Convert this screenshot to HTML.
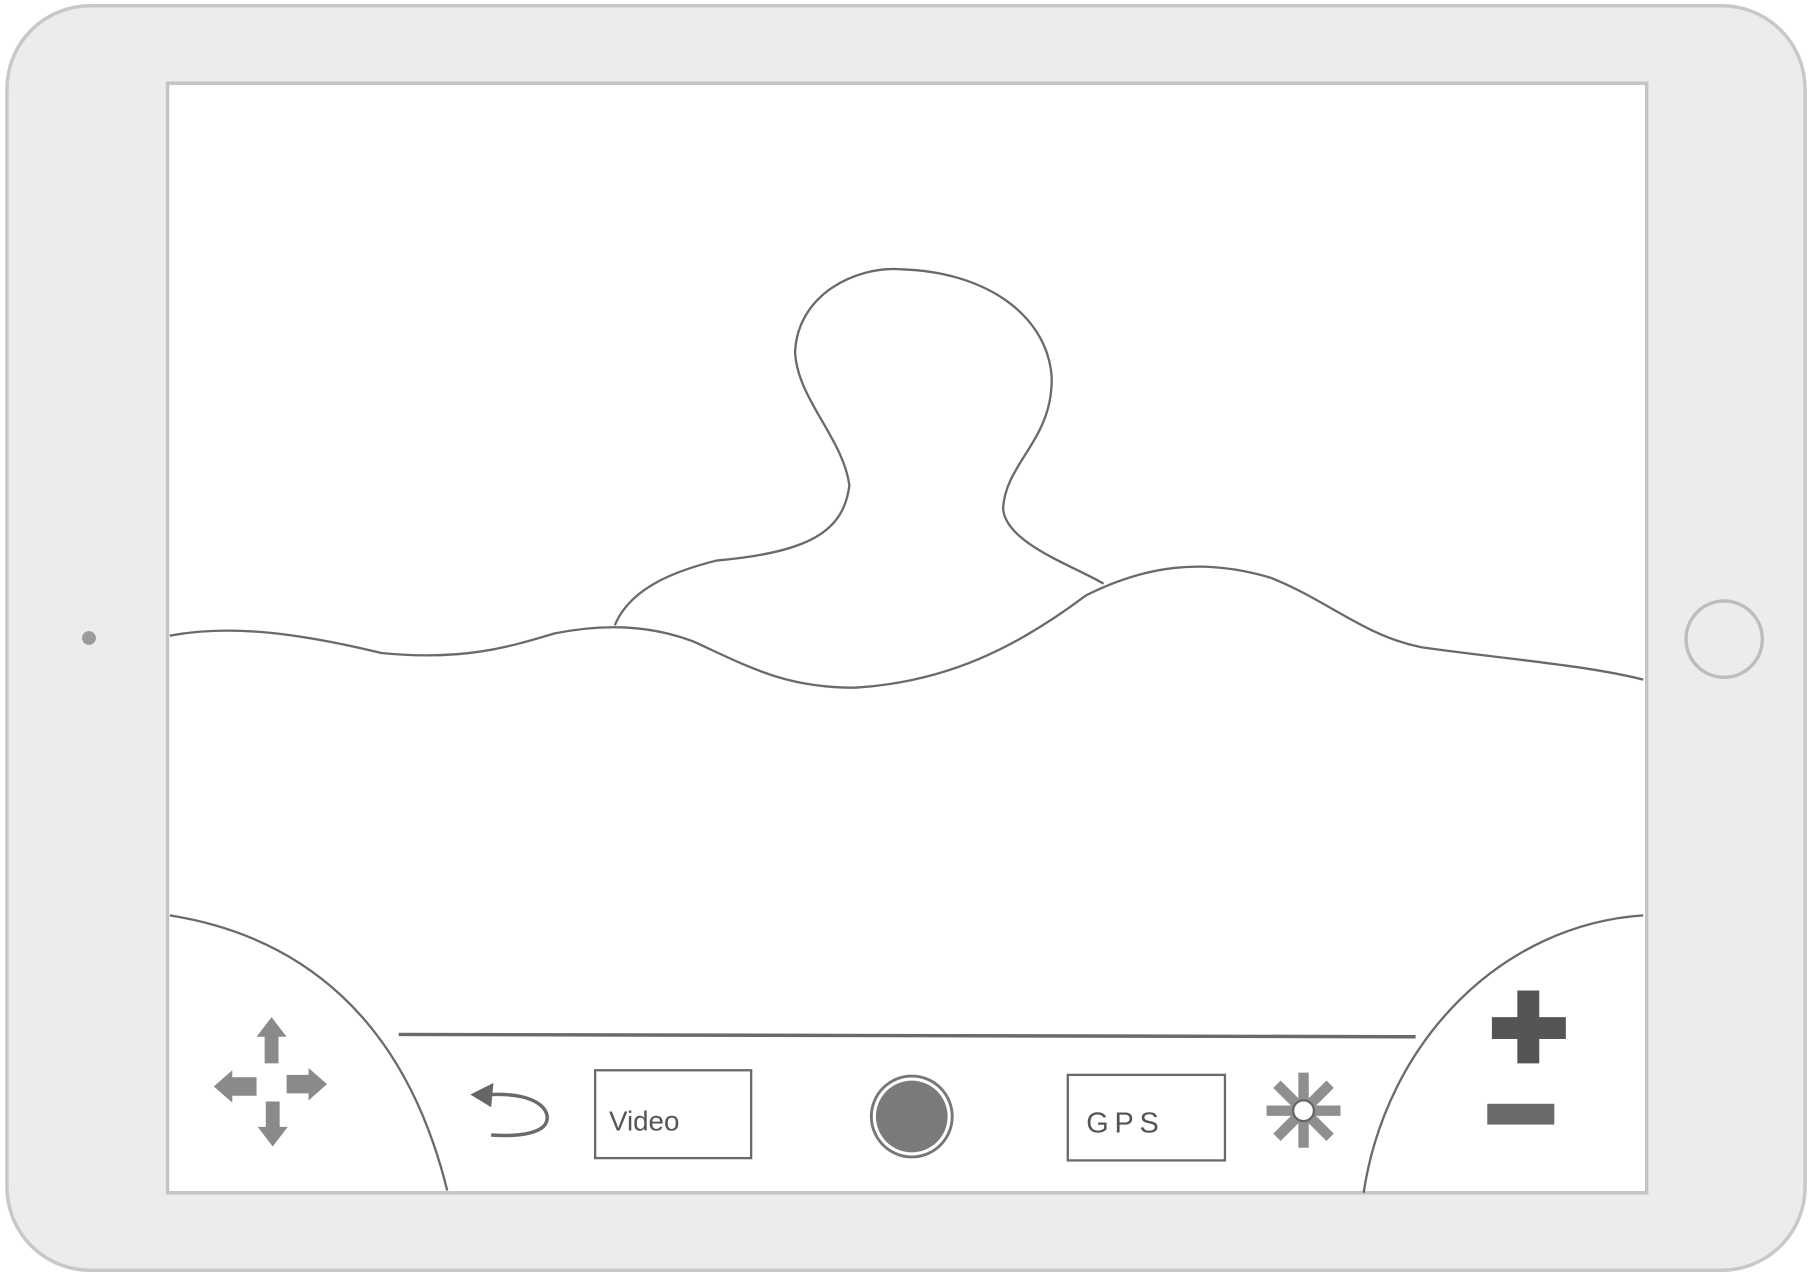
<!DOCTYPE html>
<html><head><meta charset="utf-8"><style>
html,body{margin:0;padding:0;background:#fff;}
svg{display:block;}
text{font-family:"Liberation Sans",sans-serif;}
</style></head><body>
<svg width="1812" height="1276" viewBox="0 0 1568 1104" preserveAspectRatio="none" xmlns="http://www.w3.org/2000/svg">
<rect x="0" y="0" width="1568" height="1104" fill="#fff"/>
<rect x="6" y="5" width="1556" height="1094" rx="72" fill="#ececec" stroke="#c8c8cc" stroke-width="3"/>
<rect x="145" y="72" width="1280" height="960" fill="#fff" stroke="#c4c4c8" stroke-width="3"/>
<circle cx="77" cy="552" r="6" fill="#9a9a9a"/>
<circle cx="1492" cy="553" r="33" fill="none" stroke="#bdbdbd" stroke-width="3"/>
<g fill="none" stroke="#6a6a6a" stroke-width="2">
<path d="M147 550 C200 540 260 548 330 565 C400 572 440 560 480 548 C520 540 560 540 600 555 C650 578 680 595 740 595 C820 590 880 560 940 515 C990 490 1040 482 1100 500 C1150 520 1180 550 1230 560 C1300 570 1370 575 1422 588"/>
<path d="M532 541 C545 510 580 495 620 485 C700 478 730 460 735 420 C730 380 690 345 688 305 C690 255 740 230 780 233 C850 235 905 270 910 325 C912 380 870 400 868 440 C870 470 930 490 955 505"/>
<path d="M147 792 C260 810 350 880 387 1030"/>
<path d="M1180 1032 C1200 900 1300 800 1422 792"/>
<path d="M345 895 L1225 897" stroke-width="3"/>
<rect x="515" y="926" width="135" height="76"/>
<rect x="924" y="930" width="136" height="74"/>
<path d="M425 947 C470 945 480 965 470 975 C460 983 440 983 425 982" stroke-width="3"/>
</g>
<path d="M407 947 L427 937 L425 958 Z" fill="#666"/>
<text x="527" y="978" font-size="24" fill="#555">Video</text>
<text x="940" y="980" font-size="25" fill="#555" letter-spacing="5">GPS</text>
<circle cx="789" cy="966" r="35" fill="none" stroke="#777" stroke-width="2.5"/>
<circle cx="789" cy="966" r="31" fill="#7a7a7a"/>
<g fill="#8a8a8a">
<path d="M235 880 L248 897 L241 897 L241 920 L229 920 L229 897 L222 897 Z"/>
<path d="M236 992 L249 975 L242 975 L242 953 L230 953 L230 975 L223 975 Z"/>
<path d="M185 940 L201 926 L201 932 L222 932 L222 948 L201 948 L201 954 Z"/>
<path d="M283 938 L267 924 L267 930 L248 930 L248 946 L267 946 L267 952 Z"/>
</g>
<g stroke="#8f8f8f" stroke-width="9">
<path d="M1128 928 L1128 993 M1096 961 L1160 961 M1105 938 L1151 984 M1151 938 L1105 984"/>
</g>
<circle cx="1128" cy="961" r="9" fill="#fff" stroke="#666" stroke-width="2"/>
<path d="M1313 857 L1332 857 L1332 880 L1355 880 L1355 899 L1332 899 L1332 920 L1313 920 L1313 899 L1291 899 L1291 880 L1313 880 Z" fill="#555"/>
<rect x="1287" y="955" width="58" height="18" fill="#6a6a6a"/>
</svg>
</body></html>
